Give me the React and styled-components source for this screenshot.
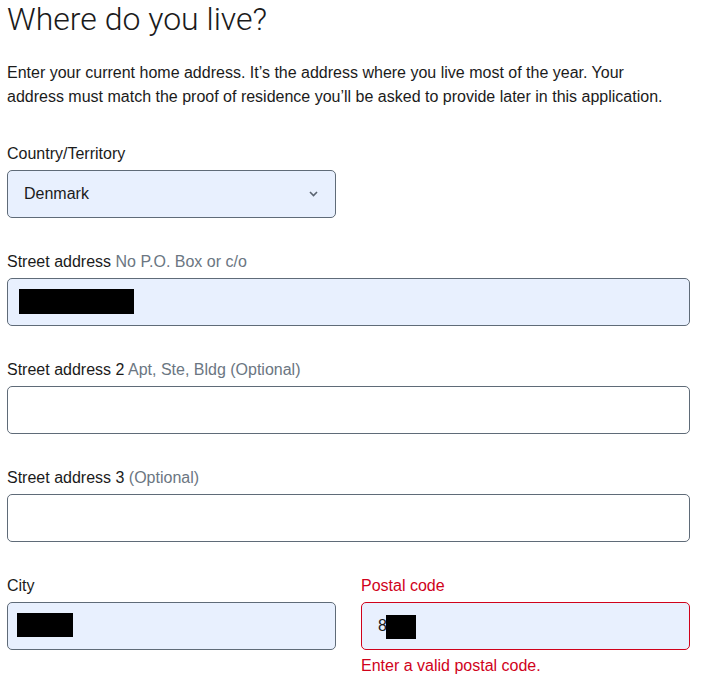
import React from 'react';
import styled, { createGlobalStyle } from 'styled-components';

const GlobalStyle = createGlobalStyle`
  html, body {
    margin: 0;
    padding: 0;
    background: #ffffff;
  }
  body {
    font-family: "Liberation Sans", Arial, sans-serif;
    color: #1b1b1b;
  }
`;

const Page = styled.div`
  width: 704px;
  box-sizing: border-box;
  padding: 0 14px 0 7px;
`;

const Title = styled.h1`
  margin: 0;
  font-family: Roboto, "Liberation Sans", sans-serif;
  font-weight: 300;
  font-size: 32px;
  line-height: 38px;
  color: #1b1b1b;
`;

const Intro = styled.p`
  margin: 23px 0 33px;
  max-width: 672px;
  font-size: 16px;
  line-height: 24px;
  color: #1b1b1b;
`;

const Field = styled.div`
  display: flex;
  flex-direction: column;
  margin-bottom: ${(p) => (p.$last ? '0' : '32px')};
  width: ${(p) => (p.$narrow ? '329px' : '100%')};
`;

const Label = styled.label`
  font-size: 16px;
  line-height: 24px;
  margin-bottom: 4px;
  color: ${(p) => (p.$error ? '#d0021b' : '#1b1b1b')};
`;

const Hint = styled.span`
  color: #6b7682;
`;

const Box = styled.div`
  position: relative;
  height: 48px;
  box-sizing: border-box;
  border: 1px solid ${(p) => (p.$error ? '#d0021b' : '#5f6b78')};
  border-radius: 5px;
  background: ${(p) => (p.$filled ? '#e8f0fe' : '#ffffff')};
  display: flex;
  align-items: center;
`;

const Input = styled.input`
  flex: 1;
  height: 100%;
  border: 0;
  outline: none;
  background: transparent;
  padding: 0 16px;
  font-family: "Liberation Sans", Arial, sans-serif;
  font-size: 16px;
  color: #1b1b1b;
  min-width: 0;
`;

const SelectValue = styled.div`
  flex: 1;
  padding: 0 16px;
  font-size: 16px;
  color: #1b1b1b;
`;

const Chevron = styled.svg`
  margin-right: 17px;
`;

const Redaction = styled.span`
  position: absolute;
  background: #000000;
`;

const Row = styled.div`
  display: grid;
  grid-template-columns: 329px 329px;
  column-gap: 25px;
`;

const ErrorText = styled.div`
  margin-top: 4px;
  font-size: 16px;
  line-height: 24px;
  color: #d0021b;
`;

export default function App() {
  return (
    <Page>
      <GlobalStyle />
      <Title>Where do you live?</Title>
      <Intro>
        Enter your current home address. It’s the address where you live most of the year. Your
        address must match the proof of residence you’ll be asked to provide later in this application.
      </Intro>

      <Field $narrow>
        <Label>Country/Territory</Label>
        <Box $filled>
          <SelectValue>Denmark</SelectValue>
          <Chevron width="9" height="6" viewBox="0 0 9 6">
            <path d="M1 1l3.5 3.5L8 1" fill="none" stroke="#5a6470" strokeWidth="1.6" />
          </Chevron>
        </Box>
      </Field>

      <Field>
        <Label>
          Street address <Hint>No P.O. Box or c/o</Hint>
        </Label>
        <Box $filled>
          <Input defaultValue="" />
          <Redaction style={{ left: 11, top: 10, width: 115, height: 25 }} />
        </Box>
      </Field>

      <Field>
        <Label>
          Street address 2 <Hint>Apt, Ste, Bldg (Optional)</Hint>
        </Label>
        <Box>
          <Input defaultValue="" />
        </Box>
      </Field>

      <Field>
        <Label>
          Street address 3 <Hint>(Optional)</Hint>
        </Label>
        <Box>
          <Input defaultValue="" />
        </Box>
      </Field>

      <Row>
        <Field $last>
          <Label>City</Label>
          <Box $filled>
            <Input defaultValue="" />
            <Redaction style={{ left: 9, top: 10, width: 56, height: 24 }} />
          </Box>
        </Field>
        <Field $last>
          <Label $error>Postal code</Label>
          <Box $filled $error>
            <Input defaultValue="8" />
            <Redaction style={{ left: 24, top: 12, width: 30, height: 24 }} />
          </Box>
          <ErrorText>Enter a valid postal code.</ErrorText>
        </Field>
      </Row>
    </Page>
  );
}
